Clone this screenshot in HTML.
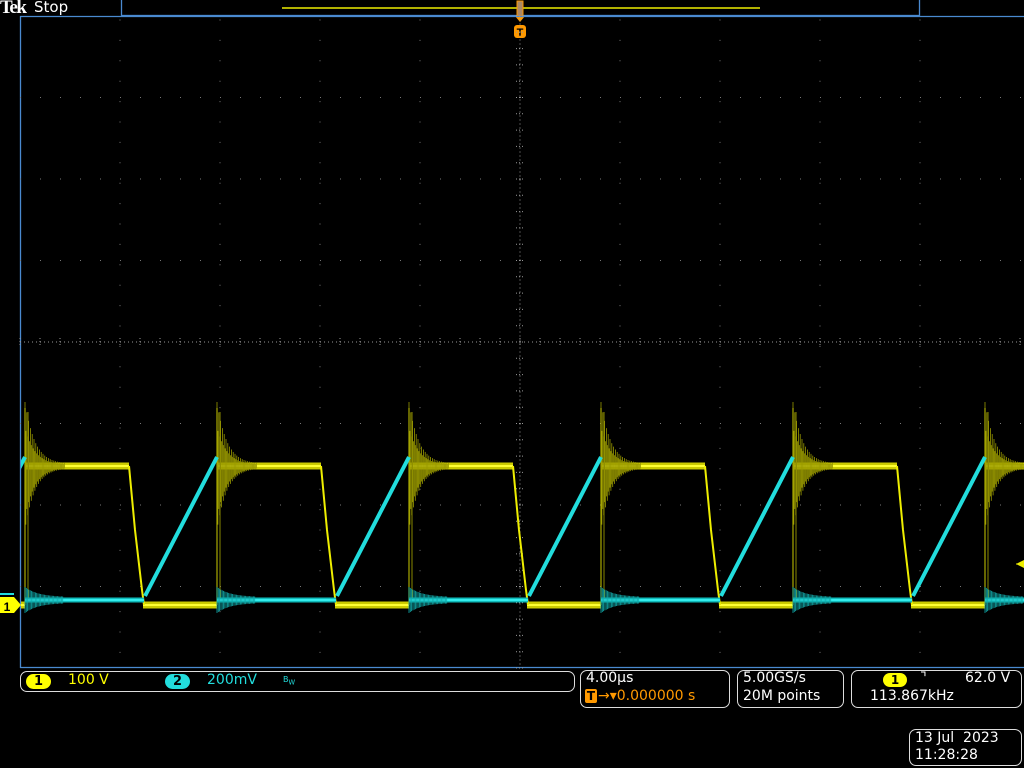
<!DOCTYPE html>
<html><head><meta charset="utf-8"><style>
html,body{margin:0;padding:0;background:#000;width:1024px;height:768px;overflow:hidden;font-family:"DejaVu Sans","Liberation Sans",sans-serif}
.t{position:absolute;white-space:nowrap}
.box{position:absolute;border:1.5px solid #ddd;border-radius:7px;box-sizing:border-box}
</style></head><body>
<svg id="s" width="1024" height="768" style="position:absolute;left:0;top:0" xmlns="http://www.w3.org/2000/svg"></svg>
<div class="t" style="left:0;top:-3px;color:#fff;font-size:19px;font-weight:bold;letter-spacing:-1.5px;font-family:'Liberation Serif',serif">Tek</div>
<div class="t" style="left:34px;top:-2px;color:#fff;font-size:15px">Stop</div>

<div class="box" style="left:20px;top:671px;width:555px;height:21px"></div>
<div class="t" style="left:26px;top:674px;width:25px;height:15px;border-radius:8px;background:#ff0;color:#000;font-size:13px;text-align:center;line-height:15px;font-weight:bold">1</div>
<div class="t" style="left:68px;top:672px;color:#ff0;font-size:14px">100 V</div>
<div class="t" style="left:165px;top:674px;width:25px;height:15px;border-radius:8px;background:#2dd;color:#000;font-size:13px;text-align:center;line-height:15px;font-weight:bold">2</div>
<div class="t" style="left:207px;top:672px;color:#2dd;font-size:14px">200mV</div>
<div class="t" style="left:283px;top:675px;color:#2dd;font-size:8px">B<sub>W</sub></div>

<div class="box" style="left:580px;top:670px;width:150px;height:38px"></div>
<div class="t" style="left:586px;top:670px;color:#fff;font-size:14px">4.00µs</div>
<div class="t" style="left:585px;top:689px;width:12px;height:14px;background:#f90;color:#000;font-size:12px;font-weight:bold;text-align:center;line-height:14px;border-radius:2px">T</div>
<div class="t" style="left:598px;top:688px;color:#f90;font-size:14px">→▾0.000000 s</div>

<div class="box" style="left:737px;top:670px;width:107px;height:38px"></div>
<div class="t" style="left:743px;top:670px;color:#fff;font-size:14px">5.00GS/s</div>
<div class="t" style="left:743px;top:688px;color:#fff;font-size:14px">20M points</div>

<div class="box" style="left:851px;top:670px;width:171px;height:38px"></div>
<div class="t" style="left:883px;top:673px;width:24px;height:14px;border-radius:8px;background:#ff0;color:#000;font-size:12px;font-weight:bold;text-align:center;line-height:14px">1</div>
<div class="t" style="left:920px;top:670px;color:#fff;font-size:14px">⌝</div>
<div class="t" style="left:965px;top:670px;color:#fff;font-size:14px">62.0 V</div>
<div class="t" style="left:870px;top:688px;color:#fff;font-size:14px">113.867kHz</div>

<div class="box" style="left:909px;top:729px;width:113px;height:37px"></div>
<div class="t" style="left:915px;top:730px;color:#fff;font-size:14px">13 Jul&nbsp;&nbsp;2023</div>
<div class="t" style="left:915px;top:747px;color:#fff;font-size:14px">11:28:28</div>
<script>
var s=document.getElementById('s'),h='',w='';
function L(x1,y1,x2,y2,c,wd,e){return '<line x1="'+x1+'" y1="'+y1+'" x2="'+x2+'" y2="'+y2+'" stroke="'+c+'" stroke-width="'+(wd||1)+'" '+(e||'')+'/>';}
h+='<defs><clipPath id="c"><rect x="21" y="17" width="1003" height="650"/></clipPath></defs>';
h+='<rect x="121.5" y="-1" width="798" height="16.5" fill="none" stroke="#4a8ad0" stroke-width="1.3"/>';
h+=L(282,8,760,8,'#ee0',1.5);
h+='<rect x="517" y="1" width="6" height="15" fill="#a86" stroke="#f90"/>';
h+='<polygon points="515,16 525,16 520,22" fill="#f90"/>';
h+='<rect x="514" y="25" width="12" height="13" rx="3" fill="#f90"/><text x="520" y="36" font-size="11" font-weight="bold" text-anchor="middle" fill="#000" font-family="Liberation Sans">T</text>';
h+=L(20.5,16,20.5,668,'#4a8ad0',1.3)+L(20,16.5,1024,16.5,'#4a8ad0',1.3)+L(20,667.5,1024,667.5,'#4a8ad0',1.3);
var g='#777';
for(var i=1;i<10;i++){var x=20+i*100;for(var y=20;y<668;y+=(i==5?4:20.4))h+=L(x-0.5,y,x+0.5,y,i==5?'#999':g,1);}
for(var j=1;j<8;j++){var y=16+j*81.5;for(var x=20;x<1024;x+=(j==4?4:20))h+=L(x,y,x+1,y,j==4?'#999':g,1);}
for(var x=20;x<1024;x+=20){h+=L(x,338,x,346,'#999',1,'stroke-dasharray="1,2"');}
for(var y=16;y<668;y+=16.3){h+=L(516,y,524,y,'#999',1,'stroke-dasharray="1,2"');}
var P=192,x0s=[25-192,25,217,409,601,793,985];
x0s.forEach(function(x0){
 w+=L(x0,466,x0+104,466,'#cc0',7)+L(x0,466,x0+104,466,'#ff3',2);
 w+=L(x0+118,605,x0+P,605,'#cc0',7)+L(x0+118,605,x0+P,605,'#ff3',2);
 w+='<path d="M'+(x0+104)+',466 L'+(x0+110)+',530 L'+(x0+117)+',590 L'+(x0+119)+',605" fill="none" stroke="#ee0" stroke-width="2"/>';
});
x0s.forEach(function(x0){
 if(x0<0)return;
 for(var k=0;k<45;k++){var x=x0+k*0.9;var a=Math.exp(-k/11)*62+2;
  w+=L(x,466-a*(k%2?0.6:1),x,466+a*(k%2?1:0.8),'#990',0.8);}
 w+=L(x0,408,x0,605,'#aa0',1.2)+L(x0+3,412,x0+3,600,'#880',1);
});
x0s.forEach(function(x0){
 w+=L(x0,600,x0+119,600,'#1bb',5)+L(x0,600,x0+119,600,'#3ee',2);
 w+=L(x0+120,596,x0+P,457,'#2dd',4);
 if(x0>0)for(var k=0;k<30;k++){var x=x0+k*1.3;var a=Math.exp(-k/10)*10+3;w+=L(x,600-a,x,600+a,'#1aa',0.8);}
});
h+='<g clip-path="url(#c)">'+w+'</g>';
h+='<polygon points="0,597 14,597 21,605 14,613 0,613" fill="#ff0"/><text x="7" y="611" font-size="12" font-weight="bold" text-anchor="middle" fill="#000" font-family="Liberation Sans">1</text>';
h+=L(0,594,14,594,'#2dd',2);
h+='<polygon points="1016,564 1024,560 1024,568" fill="#ee0"/>'+L(1016,564,1024,564,'#ee0',1);
s.innerHTML=h;
</script>
</body></html>
